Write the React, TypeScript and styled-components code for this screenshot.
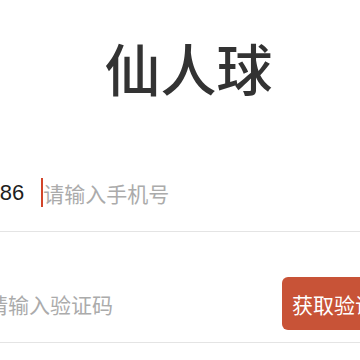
import React from 'react'
import styled, { createGlobalStyle } from 'styled-components'

const GlobalStyle = createGlobalStyle`
    html, body {
        margin: 0;
        padding: 0;
        background: #ffffff;
    }
    body {
        font-family: "Noto Sans CJK SC", "Noto Sans", sans-serif;
        overflow: hidden;
    }
`

export default function App() {
    return (
        <>
            <GlobalStyle />
            <Viewport>
                <Page>
                    <Title>仙人球</Title>
                    <Form>
                        <Row>
                            <Prefix>+86</Prefix>
                            <Caret />
                            <Input type="tel" placeholder="请输入手机号" />
                        </Row>
                        <Row>
                            <Input type="text" placeholder="请输入验证码" />
                            <CodeButton type="button">获取验证码</CodeButton>
                        </Row>
                    </Form>
                </Page>
            </Viewport>
        </>
    )
}

const Viewport = styled.div`
    width: 360px;
    height: 360px;
    overflow: hidden;
`

const Page = styled.div`
    margin-left: -13px;
    width: 403px;
    padding-top: 29px;
`

const Title = styled.h1`
    margin: 0 0 16px;
    text-align: center;
    font-size: 56px;
    line-height: 76px;
    font-weight: 500;
    color: #333333;
    letter-spacing: 0;
`

const Form = styled.div`
    width: 420px;
    display: flex;
    flex-direction: column;
`

const Row = styled.div`
    display: flex;
    align-items: center;
    height: 53px;
    padding: 45px 0 12px;
    border-bottom: 1px solid #e4e4e4;
`

const Prefix = styled.span`
    font-family: "Liberation Sans", Arial, sans-serif;
    font-size: 22px;
    color: #1e1e1e;
    margin-right: 17px;
    flex-shrink: 0;
`

const Caret = styled.span`
    width: 2px;
    height: 29px;
    background: #d2452a;
    flex-shrink: 0;
`

const Input = styled.input`
    flex: 1;
    min-width: 0;
    border: none;
    outline: none;
    padding: 0;
    background: transparent;
    font-family: "Noto Sans CJK SC", "Noto Sans", sans-serif;
    font-size: 21px;
    color: #222222;

    &::placeholder {
        color: #ababab;
    }
`

const CodeButton = styled.button`
    flex-shrink: 0;
    height: 53px;
    padding: 0 10px;
    border: none;
    border-radius: 6px;
    background: #c85337;
    color: #ffffff;
    font-family: "Noto Sans CJK SC", "Noto Sans", sans-serif;
    font-size: 21px;
    white-space: nowrap;
`
